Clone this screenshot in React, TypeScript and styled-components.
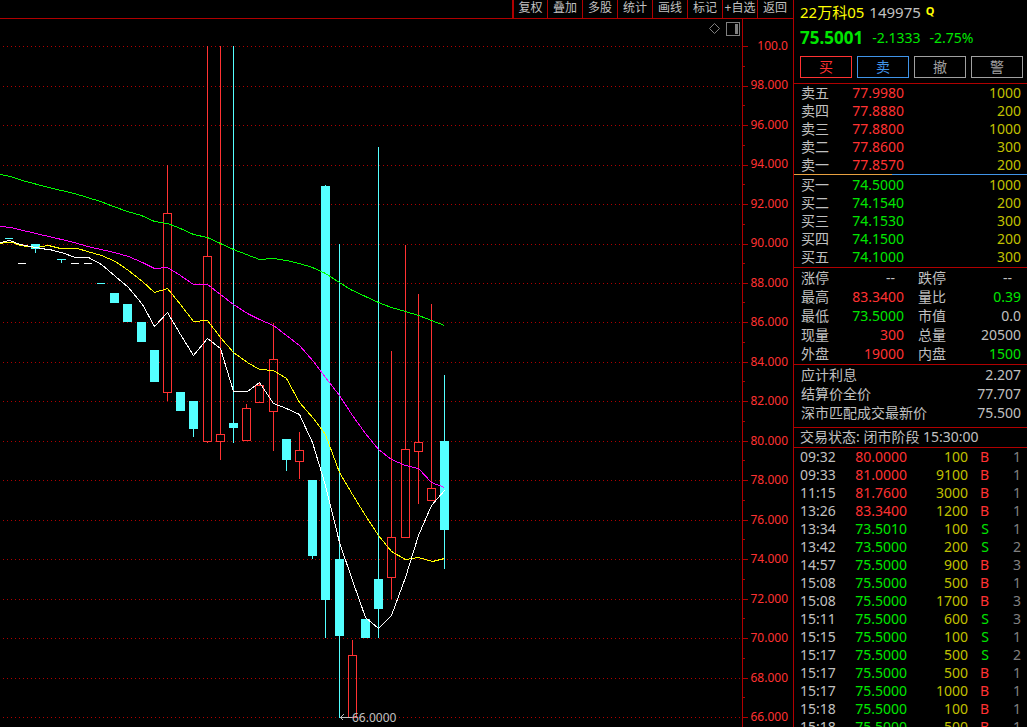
import React from "react";
import styled, { createGlobalStyle } from "styled-components";

const color = {
  line: "#b00000",
  red: "#ff3232",
  green: "#00e600",
  cyan: "#54ffff",
  blue: "#4094e8",
  olive: "#c0c000",
  text: "#c0c0c0",
  dim: "#808080",
  yellow: "#ffff00",
};

const GlobalStyle = createGlobalStyle`
  * { box-sizing: border-box; }
  body {
    margin: 0;
    background: #000;
    color: ${color.text};
    font-family: "Noto Sans", "Noto Sans CJK SC", sans-serif;
    font-size: 14px;
  }
  button { font-family: inherit; cursor: pointer; }
`;

const Page = styled.div`
  display: grid;
  grid-template-columns: minmax(0, 1fr) 234px;
  height: 100vh;
  overflow: hidden;
`;

const ChartSide = styled.main`
  display: flex;
  flex-direction: column;
  min-height: 0;
`;

const Toolbar = styled.nav`
  display: flex;
  justify-content: flex-end;
  flex: none;
  height: 19px;
  padding-right: 1px;
  border-bottom: 1px solid ${color.line};
`;

const ToolButton = styled.button`
  width: 35px;
  padding: 0 0 2px;
  border: 0;
  border-left: 1px solid ${color.line};
  background: none;
  color: ${color.text};
  font-size: 12px;
  line-height: 16px;
  white-space: nowrap;
  overflow: hidden;

  &:first-child { border-left-width: 2px; }
`;

const ChartRow = styled.div`
  position: relative;
  display: flex;
  flex: 1;
  min-height: 0;
`;

const Plot = styled.svg`
  flex: 1;
  min-width: 0;
  height: 100%;
  shape-rendering: crispEdges;
`;

const Scale = styled.ol`
  display: flex;
  flex-direction: column;
  justify-content: space-between;
  width: 45px;
  margin: 0;
  padding: 19px 5px 2px 0;
  list-style: none;
  color: ${color.red};
  font-size: 12px;
  line-height: 16px;
  text-align: right;
`;

const ChartTools = styled.div`
  position: absolute;
  top: 3px;
  right: 53px;
  display: flex;
  gap: 6px;
`;

const IconButton = styled.button`
  display: flex;
  padding: 0;
  border: 0;
  background: none;
  color: ${color.dim};
`;

const Panel = styled.aside`
  border-left: 1px solid ${color.line};
  overflow: hidden;
`;

const Header = styled.header`
  height: 84px;
  padding: 2px 4px 0 6px;
  border-bottom: 1px solid ${color.line};
`;

const Title = styled.h1`
  display: flex;
  gap: 5px;
  margin: 0;
  color: ${color.text};
  font-size: 15px;
  font-weight: 400;
  line-height: 20px;
`;

const Name = styled.span`
  color: ${color.yellow};
`;

const Mark = styled.sup`
  color: ${color.yellow};
  font-size: 11px;
  font-weight: 700;
  line-height: 18px;
`;

const Quote = styled.div`
  display: flex;
  align-items: center;
  gap: 9px;
  height: 30px;
  color: ${color.green};
`;

const Price = styled.strong`
  font-size: 17px;
`;

const Actions = styled.div`
  display: grid;
  grid-template-columns: repeat(4, 1fr);
  gap: 5px;
  margin-top: 4px;
`;

const ActionButton = styled.button<{ $tone: string }>`
  height: 22px;
  padding: 0;
  border: 1px solid ${(p) => p.$tone};
  background: none;
  color: ${(p) => p.$tone};
  font-size: 14px;
  line-height: 18px;
`;

const Divider = styled.div`
  height: 1px;
  background: linear-gradient(to right, #e8a040 42%, ${color.blue} 42%);
`;

const OrderBlock = styled.section<{ $pad?: number }>`
  padding: ${(p) => p.$pad ?? 0}px 0 ${(p) => p.$pad ?? 0}px 7px;
`;

const Section = styled.section<{ $bottom?: number }>`
  padding: 0 0 ${(p) => p.$bottom ?? 0}px 7px;
  border-bottom: 1px solid ${color.line};
`;

const StatsSection = styled(Section)`
  border-top: 1px solid ${color.line};
`;

const Table = styled.table<{ $row: number }>`
  width: 100%;
  border-collapse: collapse;
  table-layout: fixed;
  line-height: ${(p) => p.$row}px;

  tr { height: ${(p) => p.$row}px; }
`;

const Label = styled.th`
  padding: 0;
  font-weight: 400;
  text-align: left;
  white-space: nowrap;
`;

const SecondLabel = styled(Label)`
  padding-left: 14px;
`;

const Value = styled.td<{ $tone?: string; $inset?: number }>`
  padding: 0 ${(p) => p.$inset ?? 0}px 0 0;
  color: ${(p) => p.$tone ?? color.text};
  text-align: right;
`;

const Status = styled.p`
  margin: 0;
  padding: 0 0 2px 6px;
  border-bottom: 1px solid ${color.line};
  line-height: 17px;
`;

const Trades = styled.section`
  padding-left: 6px;
`;

const tools = ["复权", "叠加", "多股", "统计", "画线", "标记", "+自选", "返回"];

const gridY = [46, 86, 125, 165, 204, 244, 283, 322, 362, 401, 441, 480, 520, 559, 599, 638, 678, 717];
const minorY = gridY.slice(0, -1).map((y, i) => Math.floor((y + gridY[i + 1]) / 2));

type Tone = "up" | "down";
// centre x, high, body top, body bottom, low, direction
const candles: [number, number, number, number, number, Tone][] = [
  [35, 244, 244, 249, 253, "down"],
  [61, 259, 259, 260, 263, "down"],
  [114, 293, 293, 303, 303, "down"],
  [127, 304, 304, 322, 322, "down"],
  [141, 322, 322, 342, 342, "down"],
  [154, 350, 350, 382, 382, "down"],
  [167, 165, 213, 393, 401, "up"],
  [180, 392, 392, 411, 411, "down"],
  [193, 401, 401, 429, 437, "down"],
  [207, 46, 256, 442, 443, "up"],
  [220, 46, 434, 442, 460, "up"],
  [233, 46, 423, 428, 443, "down"],
  [246, 404, 408, 441, 441, "up"],
  [259, 382, 385, 403, 403, "up"],
  [273, 323, 359, 412, 451, "up"],
  [286, 439, 439, 460, 471, "down"],
  [299, 432, 450, 462, 479, "up"],
  [312, 480, 480, 556, 559, "down"],
  [325, 185, 186, 600, 638, "down"],
  [339, 244, 559, 636, 718, "down"],
  [352, 640, 655, 718, 718, "up"],
  [365, 619, 619, 638, 638, "down"],
  [378, 147, 579, 609, 638, "down"],
  [391, 351, 537, 578, 599, "up"],
  [405, 245, 449, 538, 538, "up"],
  [418, 294, 442, 452, 504, "up"],
  [431, 304, 488, 501, 501, "up"],
  [444, 375, 441, 530, 569, "down"],
];

// flat sessions: left x, y, colour
const dashes: [number, number, string][] = [
  [5, 238, color.cyan],
  [18, 263, "#fff"],
  [44, 249, "#fff"],
  [71, 263, "#fff"],
  [84, 263, "#fff"],
  [97, 283, color.cyan],
];

const averages = [
  {
    stroke: "#00ff00",
    points:
      "0,174 10,176 22,180 48,187 61,190 74,193 87,197 100,201 113,206 127,211 141,215 154,221 167,223 180,228 193,234 207,237 220,243 233,249 246,254 259,259 273,258 286,260 299,263 312,267 325,273 339,282 350,289 365,296 378,302 391,307 405,311 418,315 431,320 444,325",
  },
  {
    stroke: "#ff00ff",
    points:
      "0,226 10,227 44,235 74,242 87,246 114,252 128,256 142,262 154,268 167,267 180,275 193,284 207,284 220,294 233,304 247,313 259,319 273,325 286,335 299,345 313,361 325,377 339,395 352,415 365,433 378,449 391,459 405,465 418,468 431,482 444,487",
  },
  {
    stroke: "#ffff00",
    points:
      "0,243 4,242 12,242 20,245 35,247 48,245 60,248 77,248 87,251 101,255 115,261 128,270 142,281 154,292 167,288 180,304 193,321 207,320 220,337 233,352 247,362 259,369 273,370 286,378 299,402 313,418 325,434 339,472 352,494 365,515 378,535 391,551 405,559 418,557 432,561 444,558",
  },
  {
    stroke: "#ffffff",
    points:
      "0,242 9,240 20,244 35,247 48,249 61,252 75,257 88,257 101,264 115,276 128,287 142,304 154,326 167,312 180,334 193,355 207,338 220,348 233,391 247,391 259,382 273,403 286,408 299,414 312,442 325,485 339,542 352,580 365,617 378,628 391,615 405,577 418,535 431,505 444,490",
  },
];

const sells = [
  ["卖五", "77.9980", "1000"],
  ["卖四", "77.8880", "200"],
  ["卖三", "77.8800", "1000"],
  ["卖二", "77.8600", "300"],
  ["卖一", "77.8570", "200"],
];
const buys = [
  ["买一", "74.5000", "1000"],
  ["买二", "74.1540", "200"],
  ["买三", "74.1530", "300"],
  ["买四", "74.1500", "200"],
  ["买五", "74.1000", "300"],
];

const stats: [string, string, string, string, string, string][] = [
  ["涨停", "--", color.text, "跌停", "--", color.text],
  ["最高", "83.3400", color.red, "量比", "0.39", color.green],
  ["最低", "73.5000", color.green, "市值", "0.0", color.text],
  ["现量", "300", color.red, "总量", "20500", color.text],
  ["外盘", "19000", color.red, "内盘", "1500", color.green],
];

const bond = [
  ["应计利息", "2.207"],
  ["结算价全价", "77.707"],
  ["深市匹配成交最新价", "75.500"],
];

const trades = [
  ["09:32", "80.0000", "100", "B", "1"],
  ["09:33", "81.0000", "9100", "B", "1"],
  ["11:15", "81.7600", "3000", "B", "1"],
  ["13:26", "83.3400", "1200", "B", "1"],
  ["13:34", "73.5010", "100", "S", "1"],
  ["13:42", "73.5000", "200", "S", "2"],
  ["14:57", "75.5000", "900", "B", "3"],
  ["15:08", "75.5000", "500", "B", "1"],
  ["15:08", "75.5000", "1700", "B", "3"],
  ["15:11", "75.5000", "600", "S", "3"],
  ["15:15", "75.5000", "100", "S", "1"],
  ["15:17", "75.5000", "500", "S", "2"],
  ["15:17", "75.5000", "500", "B", "1"],
  ["15:17", "75.5000", "1000", "B", "1"],
  ["15:18", "75.5000", "100", "B", "1"],
  ["15:18", "75.5000", "500", "B", "1"],
];

function Candle({ data }: { data: (typeof candles)[number] }) {
  const [x, high, top, bottom, low, tone] = data;
  const fill = tone === "up" ? color.red : color.cyan;
  return (
    <g>
      <rect x={x} y={high} width={1} height={top - high} fill={fill} />
      <rect x={x} y={bottom} width={1} height={low - bottom} fill={fill} />
      {tone === "up" ? (
        <rect x={x - 3.5} y={top + 0.5} width={8} height={bottom - top - 1} fill="none" stroke={fill} />
      ) : (
        <rect x={x - 4} y={top} width={9} height={bottom - top} fill={fill} />
      )}
    </g>
  );
}

function Chart() {
  return (
    <Plot viewBox="0 19 748 708" preserveAspectRatio="xMinYMin meet" role="img" aria-label="K线图">
      {gridY.map((y) => (
        <line key={y} x1={3} x2={741} y1={y + 0.5} y2={y + 0.5} stroke={color.line} strokeDasharray="1 3" />
      ))}
      <rect x={742} y={19} width={1} height={708} fill={color.line} />
      {gridY.map((y) => (
        <rect key={y} x={743} y={y} width={5} height={1} fill={color.line} />
      ))}
      {minorY.map((y) => (
        <rect key={y} x={743} y={y} width={2} height={1} fill={color.line} />
      ))}
      {dashes.map(([x, y, fill]) => (
        <rect key={x} x={x} y={y} width={8} height={1} fill={fill} />
      ))}
      {candles.map((c) => (
        <Candle key={c[0]} data={c} />
      ))}
      <g transform="translate(0.5 0.5)" fill="none">
        {averages.map((a) => (
          <polyline key={a.stroke} points={a.points} stroke={a.stroke} />
        ))}
        <path d="M351 717H340M343 714L340 717L343 720" stroke={color.text} />
      </g>
      <text x={352} y={722} fill={color.text} fontSize={12}>
        66.0000
      </text>
    </Plot>
  );
}

function Orders({ rows, tone }: { rows: string[][]; tone: string }) {
  return (
    <Table $row={18}>
      <colgroup>
        <col width="28" />
        <col width="123" />
        <col />
      </colgroup>
      <tbody>
        {rows.map(([label, price, volume]) => (
          <tr key={label}>
            <Label scope="row">{label}</Label>
            <Value $tone={tone} $inset={48}>{price}</Value>
            <Value $tone={color.olive} $inset={6}>{volume}</Value>
          </tr>
        ))}
      </tbody>
    </Table>
  );
}

export default function App() {
  return (
    <>
      <GlobalStyle />
      <Page>
        <ChartSide>
          <Toolbar>
            {tools.map((t) => (
              <ToolButton key={t} type="button">{t}</ToolButton>
            ))}
          </Toolbar>
          <ChartRow>
            <Chart />
            <Scale>
              {gridY.map((y, i) => (
                <li key={y}>{i === 0 ? "100.0" : (100 - i * 2).toFixed(3)}</li>
              ))}
            </Scale>
            <ChartTools>
              <IconButton type="button" aria-label="标记点">
                <svg width="11" height="14" viewBox="0 0 11 14" fill="none" stroke="currentColor">
                  <path d="M5.5 1.5L10.5 6.5L5.5 11.5L0.5 6.5Z" />
                </svg>
              </IconButton>
              <IconButton type="button" aria-label="侧栏">
                <svg width="14" height="14" viewBox="0 0 14 14" fill="none" stroke="currentColor">
                  <rect x="0.5" y="0.5" width="13" height="13" />
                  <rect x="9" y="2" width="3" height="10" fill="currentColor" stroke="none" />
                </svg>
              </IconButton>
            </ChartTools>
          </ChartRow>
        </ChartSide>

        <Panel>
          <Header>
            <Title>
              <Name>22万科05</Name>
              <span>149975</span>
              <Mark>Q</Mark>
            </Title>
            <Quote>
              <Price>75.5001</Price>
              <span>-2.1333</span>
              <span>-2.75%</span>
            </Quote>
            <Actions>
              <ActionButton type="button" $tone={color.red}>买</ActionButton>
              <ActionButton type="button" $tone={color.blue}>卖</ActionButton>
              <ActionButton type="button" $tone="#a0a0a0">撤</ActionButton>
              <ActionButton type="button" $tone="#a0a0a0">警</ActionButton>
            </Actions>
          </Header>

          <OrderBlock>
            <Orders rows={sells} tone={color.red} />
          </OrderBlock>
          <Divider />
          <OrderBlock $pad={1}>
            <Orders rows={buys} tone={color.green} />
          </OrderBlock>

          <StatsSection $bottom={1}>
            <Table $row={19}>
              <colgroup>
                <col width="40" />
                <col width="63" />
                <col width="50" />
                <col />
              </colgroup>
              <tbody>
                {stats.map(([a, av, at, b, bv, bt]) => (
                  <tr key={a}>
                    <Label scope="row">{a}</Label>
                    <Value $tone={at} $inset={av === "--" ? 9 : 0}>{av}</Value>
                    <SecondLabel scope="row">{b}</SecondLabel>
                    <Value $tone={bt} $inset={bv === "--" ? 15 : 6}>{bv}</Value>
                  </tr>
                ))}
              </tbody>
            </Table>
          </StatsSection>

          <Section $bottom={5}>
            <Table $row={19}>
              <colgroup>
                <col width="150" />
                <col />
              </colgroup>
              <tbody>
                {bond.map(([label, value]) => (
                  <tr key={label}>
                    <Label scope="row">{label}</Label>
                    <Value $inset={6}>{value}</Value>
                  </tr>
                ))}
              </tbody>
            </Table>
          </Section>

          <Status>交易状态: 闭市阶段 15:30:00</Status>

          <Trades>
            <Table $row={18}>
              <colgroup>
                <col width="46" />
                <col width="61" />
                <col width="61" />
                <col width="21" />
                <col />
              </colgroup>
              <tbody>
                {trades.map(([time, price, volume, side, count], i) => (
                  <tr key={i}>
                    <Label scope="row">{time}</Label>
                    <Value $tone={i < 4 ? color.red : color.green}>{price}</Value>
                    <Value $tone={color.olive}>{volume}</Value>
                    <Value $tone={side === "B" ? color.red : color.green}>{side}</Value>
                    <Value $tone={color.dim} $inset={6}>{count}</Value>
                  </tr>
                ))}
              </tbody>
            </Table>
          </Trades>
        </Panel>
      </Page>
    </>
  );
}
